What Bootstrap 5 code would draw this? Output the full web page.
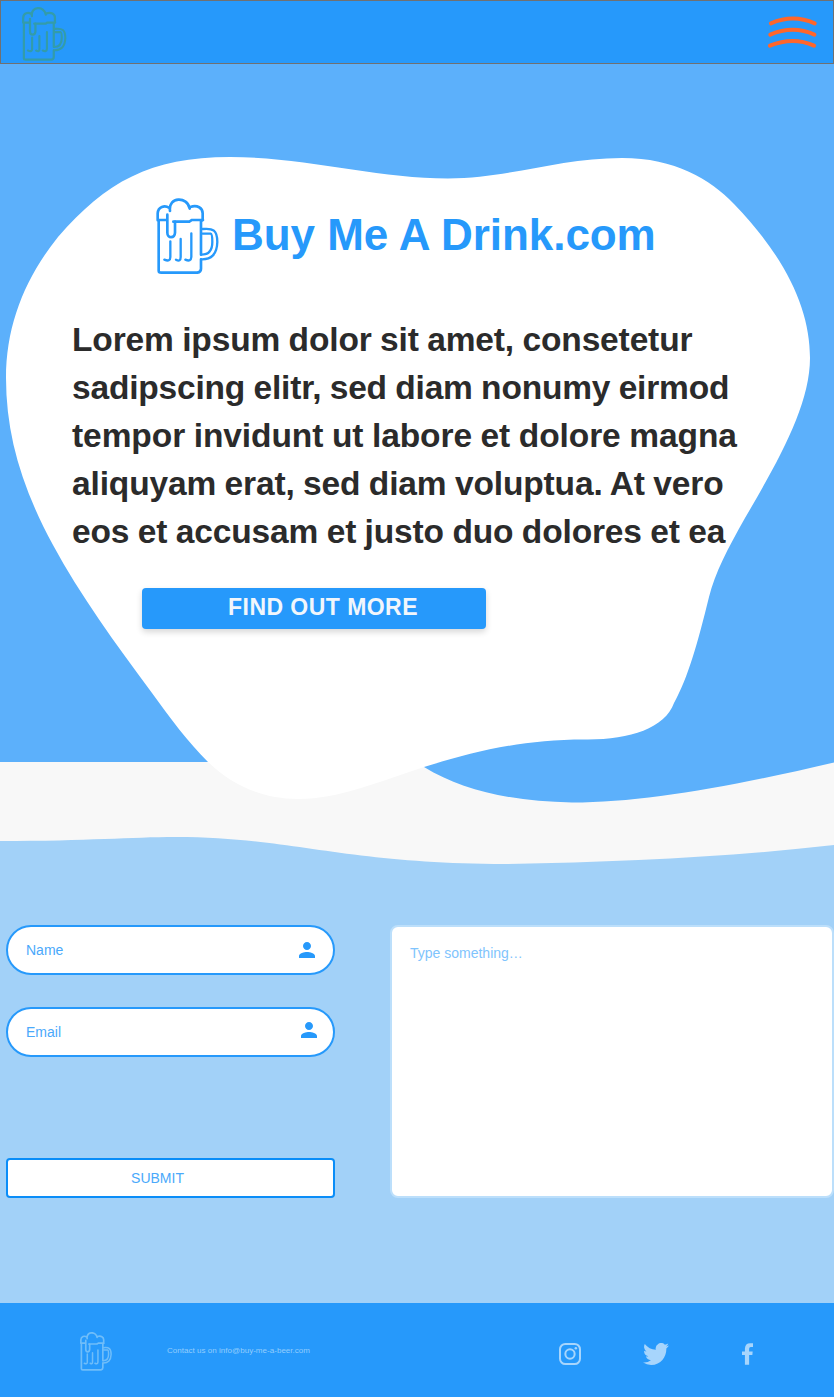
<!DOCTYPE html>
<html lang="en">
<head>
<meta charset="utf-8">
<meta name="viewport" content="width=device-width, initial-scale=1">
<title>Buy Me A Drink.com</title>
<link href="https://cdn.jsdelivr.net/npm/bootstrap@5.3.0/dist/css/bootstrap.min.css" rel="stylesheet">
<style>
body{font-family:"Liberation Sans",Arial,sans-serif;background:#f8f8f8;overflow-x:hidden}
svg{display:block;flex:none}
.mug{fill:none;stroke:currentColor;stroke-width:8;stroke-linecap:round;stroke-linejoin:round}
.topbar{height:64px;background:#2699fb;border:1px solid #707070;padding:6px 16px 0 20.5px}
.topbar .mug{color:#339ca9;width:45.2px;height:54.6px;stroke-width:9.5}
.scene{height:1239px}
.backdrop{left:0;top:0}
.hero{height:861px;padding-left:72px}
.brand{padding:134px 0 0 84px;color:#2699fb}
.brand .mug{width:64px;height:77.3px}
.brand h1{font-size:44px;font-weight:700;line-height:54px;margin:0 0 4px 12px;letter-spacing:-.05px}
.pitch{margin:41px 0 0;font-size:33.5px;line-height:48px;font-weight:700;color:#2b2b2b;white-space:nowrap;word-spacing:-.7px;letter-spacing:-.14px}
.pitch span{display:block}
.pitch span:nth-child(2){letter-spacing:-.19px}
.pitch span:nth-child(3){letter-spacing:-.07px}
.cta{width:344px;height:41px;margin:32px 0 0 70px;background:#2699fb;border:0;border-radius:4px;color:#f1f6fb;font-size:23px;font-weight:700;letter-spacing:.46px;line-height:28px;padding:0 0 4px 18px;box-shadow:0 3px 6px rgba(0,0,0,.16)}
.cta:hover{background:#1687ea;color:#fff}
.contact{gap:55px;padding-left:6px}
.fields{width:329px;height:273px}
.contact .form-control{font-size:14px;color:#2699fb;background:#fff}
.pill{height:50px;border:2px solid #2699fb;border-radius:25px;padding:0 18px}
.pill::placeholder{color:#4aa9fb;opacity:1}
.who{position:absolute;right:16px;top:13px;color:#2699fb}
.who.mail{right:14px;top:11px}
.send{height:40px;border:2px solid #0a8df8;border-radius:4px;background:#fff;color:#4aa9fb;font-size:14px;padding:0 26px 0 0}
.message{height:273px;border:2px solid #bcdffb;border-radius:8px;padding:16px 18px;resize:none}
.message::placeholder{color:#7fc4fd;opacity:1}
.foot{height:94px;background:#2699fb;color:#a7d5fc;padding:0 81px 0 80px}
.foot .mug{color:#6fbdf9;width:32.5px;height:39.2px;margin-top:4px;stroke-width:10}
.foot p{font-size:8px;margin:2px 0 0 54.5px;color:#93cdfd;white-space:nowrap;letter-spacing:.03px}
.foot .mug,.topbar .mug{--fine:9px}
</style>
</head>
<body>
<svg width="0" height="0" class="position-absolute" aria-hidden="true">
<symbol id="mug" viewBox="48 38 192 232">
<path d="M53 105V84C54 64 74 58 88 68M90 77C84 33 143 32 149 70M151 65C172 58 188 68 188 84V105M53 104H82M100 109H148L156 104H189M82 88V142C82 160 104 160 105 142V108M56 108V256Q56 262 64 262H172Q183 260 183 250V222M183 106V208"/>
<path style="stroke-width:var(--fine,7px)" d="M188 131C219 128 232 134 232 170C231 207 214 223 184 222M188 145H212Q217 146 217 170C217 198 205 208 185 208M91 168V215Q91 231 73 223M122 161V215Q122 231 108 223M154 144V215Q153 231 136 223"/>
</symbol>
</svg>

<nav class="topbar d-flex justify-content-between">
<a href="#" aria-label="Home"><svg class="mug"><use href="#mug"/></svg></a>
<svg width="49" height="52" viewBox="71 21 147 156" fill="none" stroke="#ff662b" stroke-width="12" stroke-linecap="round" role="button" aria-label="Menu"><path d="M80 70Q146 41 211 70M78 104Q146 75 210 104M77 137Q146 109 209 137"/></svg>
</nav>

<main class="scene position-relative">
<svg class="backdrop position-absolute" width="834" height="1239" viewBox="0 64 834 1239" aria-hidden="true">
<path fill="#5cb0fb" d="M0 64H834V762.500C730 787 643 802.6 572 802.6C511 801 463 791 424 767L400 762H0Z"/>
<path fill="#fff" d="M230 157C305 157 377 178.5 448 178.5C510 178 560 158 622 158C675 158 710 179 734 204C787 259 810 310 810 358C810 405 779 460 745 518C728 548 715 573 709 597C698 642 688 678 674 703C665 728 630 739.5 588 739.5C520 739 470 753 424 767C380 781 340 799 298 799C262 799 232 785 208 762C188 742 170 718 152 693C115 643 80 595 53 545C22 488 6 435 6 378C6 325 25 278 58 237C106 182 150 157 230 157Z"/>
<path fill="#a2d1f8" d="M0 841C90 841 130 837 176 837C290 837 345 864 505 864C620 862 730 857 834 845V1303H0Z"/>
</svg>

<section class="hero position-relative">
<div class="brand d-flex align-items-center">
<svg class="mug"><use href="#mug"/></svg>
<h1>Buy Me A Drink.com</h1>
</div>
<p class="pitch"><span>Lorem ipsum dolor sit amet, consetetur</span><span>sadipscing elitr, sed diam nonumy eirmod</span><span>tempor invidunt ut labore et dolore magna</span><span>aliquyam erat, sed diam voluptua. At vero</span><span>eos et accusam et justo duo dolores et ea</span></p>
<button class="cta btn d-block" type="button">FIND OUT MORE</button>
</section>

<form class="contact position-relative d-flex">
<div class="fields d-flex flex-column flex-shrink-0">
<div class="position-relative mb-4 pb-2"><input class="pill form-control" placeholder="Name" aria-label="Name"><svg class="who" width="24" height="24" viewBox="0 0 24 24" fill="currentColor"><path d="M12 12c2.21 0 4-1.79 4-4s-1.79-4-4-4-4 1.79-4 4 1.79 4 4 4zm0 2c-2.67 0-8 1.34-8 4v2h16v-2c0-2.66-5.33-4-8-4z"/></svg></div>
<div class="position-relative"><input class="pill form-control" type="email" placeholder="Email" aria-label="Email"><svg class="who mail" width="24" height="24" viewBox="0 0 24 24" fill="currentColor"><path d="M12 12c2.21 0 4-1.79 4-4s-1.79-4-4-4-4 1.79-4 4 1.79 4 4 4zm0 2c-2.67 0-8 1.34-8 4v2h16v-2c0-2.66-5.33-4-8-4z"/></svg></div>
<button class="send btn mt-auto" type="button">SUBMIT</button>
</div>
<textarea class="message form-control flex-fill" placeholder="Type something…" aria-label="Message"></textarea>
</form>
</main>

<footer class="foot d-flex align-items-center">
<svg class="mug"><use href="#mug"/></svg>
<p>Contact us on info@buy-me-a-beer.com</p>
<div class="d-flex ms-auto mt-2">
<svg width="22" height="22" viewBox="57 54 66 66" fill="none" stroke="currentColor" stroke-width="6"><rect x="60" y="57" width="60" height="60" rx="16"/><circle cx="90" cy="87" r="14"/><circle cx="107.500" cy="69.500" r="3.800" fill="currentColor" stroke="none"/></svg>
<svg style="margin-left:62px" width="26" height="22" viewBox="0 2 16 13" preserveAspectRatio="none" fill="currentColor"><path d="M5.026 15c6.038 0 9.341-5.003 9.341-9.334 0-.14 0-.282-.006-.422A6.685 6.685 0 0 0 16 3.542a6.658 6.658 0 0 1-1.889.518 3.301 3.301 0 0 0 1.447-1.817 6.533 6.533 0 0 1-2.087.793A3.286 3.286 0 0 0 7.875 6.030a9.325 9.325 0 0 1-6.767-3.429 3.289 3.289 0 0 0 1.018 4.382A3.323 3.323 0 0 1 .64 6.575v.045a3.288 3.288 0 0 0 2.632 3.218 3.203 3.203 0 0 1-.865.115 3.230 3.230 0 0 1-.614-.057 3.283 3.283 0 0 0 3.067 2.277A6.588 6.588 0 0 1 .780 13.580a6.320 6.320 0 0 1-.780-.045A9.344 9.344 0 0 0 5.026 15z"/></svg>
<svg style="margin-left:73px" width="11" height="22" viewBox="605 54 34 66" fill="currentColor"><path d="M639 54V65H632Q627 65 627 71V79H638L637 90H627V120H614V90H605V79H614V70Q615 54 630 54Z"/></svg>
</div>
</footer>
<script src="https://cdn.jsdelivr.net/npm/bootstrap@5.3.0/dist/js/bootstrap.bundle.min.js"></script>
</body>
</html>
